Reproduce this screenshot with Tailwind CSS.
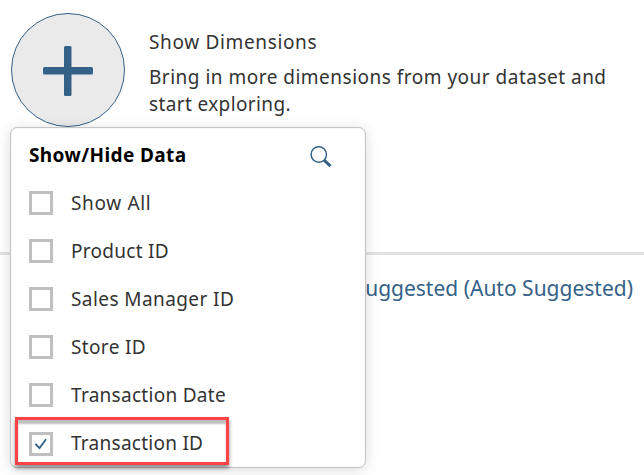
<!DOCTYPE html>
<html lang="en">
<head>
<meta charset="utf-8">
<title>Show Dimensions</title>
<script src="https://cdn.jsdelivr.net/npm/@tailwindcss/browser@4"></script>
</head>
<body class="relative h-[475px] w-[644px] overflow-hidden bg-white font-['Noto_Sans',sans-serif] text-[19px] text-[#333]">
<header class="flex h-[252px] pt-[13px] pl-[11px]">
  <button class="flex size-[114px] shrink-0 items-center justify-center rounded-full border border-[#346187] bg-[#eaeaea]" aria-label="Add">
    <svg class="size-[50px] translate-y-px" viewBox="0 0 50 50" fill="#346187"><rect x="21" width="7.5" height="50" rx="1.5"/><rect y="21" width="50" height="7.5" rx="1.5"/></svg>
  </button>
  <div class="pt-4 pl-6 leading-[27px] whitespace-nowrap">
    <h1><span class="tracking-[0.65px]">Show Dimensions</span></h1>
    <p class="mt-2"><span class="tracking-[0.49px]">Bring in more dimensions from your dataset and</span><br><span class="tracking-[0.37px]">start exploring.</span></p>
  </div>
</header>
<section class="flex justify-end border-t-3 border-[#e1e1e1] pt-[19px] pr-[11px] text-[21px] leading-[28px] text-[#346187]">
  <h2 class="whitespace-nowrap">Suggested (Auto Suggested)</h2>
</section>
<aside class="absolute top-[127px] left-[10px] h-[341px] w-[356px] rounded-[7px] border border-[#c6c6c6] bg-white p-px shadow-[0_2px_14px_rgba(0,0,0,0.14),inset_0_0_1px_rgba(0,0,0,0.2)]">
  <div class="flex h-[50px] items-center justify-between pt-[3px] pr-[32px] pl-[17px]">
    <h3 class="font-bold tracking-[0.4px] text-black">Show/Hide Data</h3>
    <svg class="mt-[3px] size-[22px]" viewBox="0 0 22 22" fill="none" stroke="#346187"><circle cx="8.8" cy="8.5" r="7.7" stroke-width="1.5"/><path d="M14.3 14.3l6.2 5.8" stroke-width="3"/></svg>
  </div>
  <ul class="pl-[17px]">
    <li class="flex h-12 items-center gap-[18px]"><span class="size-6 border-3 border-[#bfbfbf]"></span><span class="tracking-[0.65px]">Show All</span></li>
    <li class="flex h-12 items-center gap-[18px]"><span class="size-6 border-3 border-[#bfbfbf]"></span><span class="tracking-[0.28px]">Product ID</span></li>
    <li class="flex h-12 items-center gap-[18px]"><span class="size-6 border-3 border-[#bfbfbf]"></span><span class="tracking-[0.42px]">Sales Manager ID</span></li>
    <li class="flex h-12 items-center gap-[18px]"><span class="size-6 border-3 border-[#bfbfbf]"></span><span class="tracking-[0.35px]">Store ID</span></li>
    <li class="flex h-12 items-center gap-[18px]"><span class="size-6 border-3 border-[#bfbfbf]"></span><span class="tracking-[0.28px]">Transaction Date</span></li>
    <li class="flex h-12 items-center gap-[18px]"><span class="mt-[2px] size-6 border-3 border-[#bfbfbf]"><svg class="size-[18px]" viewBox="0 0 18 18" fill="none" stroke="#346187" stroke-width="1.8"><path d="M3.3 8.8l4.2 4.2 6.5-8.8"/></svg></span><span class="tracking-[0.26px]">Transaction ID</span></li>
  </ul>
  <div class="absolute top-[289px] left-[4px] h-[48px] w-[214px] border-3 border-[#ff4245] shadow-[0_3px_4px_rgba(0,0,0,0.45),inset_0_4px_2px_rgba(0,0,0,0.25)]"></div>
</aside>
</body>
</html>
